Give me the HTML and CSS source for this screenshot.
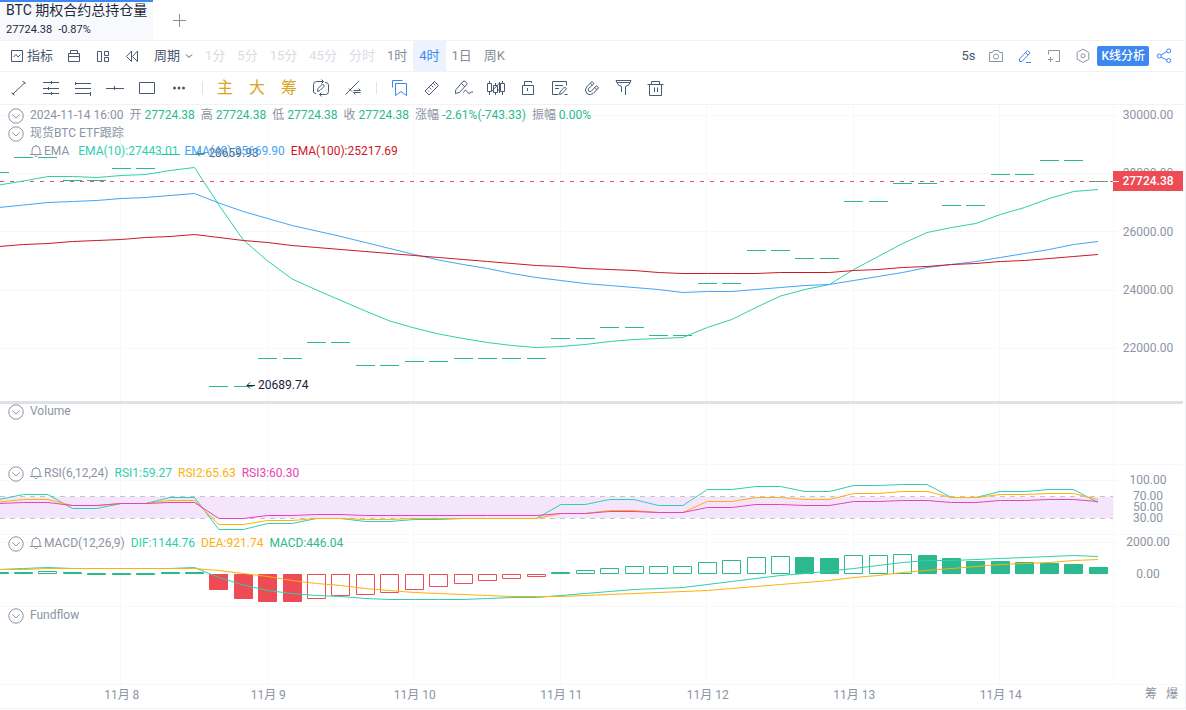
FILE: index.html
```html
<!DOCTYPE html>
<html lang="zh-CN">
<head>
<meta charset="utf-8">
<meta name="viewport" content="width=device-width, initial-scale=1">
<title>BTC 期权合约总持仓量</title>
<link rel="stylesheet" href="styles.css">
</head>
<body>
<svg class="defs" aria-hidden="true">
  <symbol id="i-collapse" viewBox="0 0 16 16"><circle cx="8" cy="8" r="7.2"/><path d="M4.2 6.4 8 10l3.8-3.6"/></symbol>
  <symbol id="i-bell" viewBox="0 0 12 14"><path d="M0 10.500h12M2 10.500V6a4 4 0 0 1 8 0v4.500M6 2V.8M4.500 11.500c.3 1.500 2.700 1.500 3 0"/></symbol>
</svg>
<div class="app">
  <header class="tabs">
    <button class="tab">
      <span class="tab-title">BTC 期权合约总持仓量</span>
      <span class="tab-sub"><span>27724.38</span><span>-0.87%</span></span>
    </button>
    <button class="icon-btn add" aria-label="添加"><svg viewBox="0 0 18 18"><path d="M9.500 3v13M3 9.500h13"/></svg></button>
  </header>

  <nav class="bar periods">
    <button class="tool labelled"><svg viewBox="0 0 14 14"><path d="M1.500 1.500h11v11h-11zM3.500 8 6 5.500l2 2.500 2.500-2.500"/></svg><span>指标</span></button>
    <button class="tool" aria-label="工具箱"><svg viewBox="0 0 14 14"><path d="M1.500 4.500h11v8h-11zM1.500 7.500h11M3.500 4.500v-3h7v3"/></svg></button>
    <button class="tool" aria-label="布局"><svg viewBox="0 0 14 14"><path d="M1.500 2.500h4v10h-4zM8.500 2.500h4v4h-4zM8.500 8.500h4v4h-4z"/></svg></button>
    <button class="tool" aria-label="回放"><svg viewBox="0 0 14 14"><path d="M6.500 2 1.500 7.500l5 5zM12.500 2l-5 5.500 5 5z"/></svg></button>
    <label class="period-select"><select aria-label="周期"><option>周期</option></select><svg viewBox="0 0 10 10"><path d="M2 3.500 5 6.500l3-3"/></svg></label>
    <button class="period off">1分</button>
    <button class="period off">5分</button>
    <button class="period off">15分</button>
    <button class="period off">45分</button>
    <button class="period off">分时</button>
    <button class="period">1时</button>
    <button class="period active">4时</button>
    <button class="period">1日</button>
    <button class="period">周K</button>
    <div class="actions">
      <span class="refresh">5s</span>
      <button class="act grey" aria-label="截图"><svg viewBox="0 0 16 16"><path d="M1.500 4.500h3l1-2h5l1 2h3v9h-13z"/><circle cx="8" cy="8.500" r="2.500"/></svg></button>
      <button class="act blue" aria-label="画线"><svg viewBox="0 0 16 16"><path d="M2.500 11 10.500 2.500l2.500 2.500-8 8.500H2.500zM8.500 4.500 11 7M9 14.500h5"/></svg></button>
      <button class="act grey" aria-label="新窗口"><svg viewBox="0 0 16 16"><path d="M2.500 6.500v-4h11v11h-4M4.500 9v5M2 11.500h5"/></svg></button>
      <button class="act grey" aria-label="设置"><svg viewBox="0 0 16 16"><path d="M8 1.200 13.800 4.400v6.800L8 14.500l-5.800-3.300V4.400z"/><circle cx="8" cy="7.800" r="2"/></svg></button>
      <button class="analyse">K线分析</button>
      <button class="act blue" aria-label="分享"><svg viewBox="0 0 16 16"><path d="m5 7 6-3.500M5 9l6 3.200"/><circle cx="3.200" cy="8" r="2"/><circle cx="12.700" cy="2.900" r="2"/><circle cx="12.700" cy="12.500" r="2"/></svg></button>
    </div>
  </nav>

  <nav class="bar drawing">
    <button class="icon-btn" aria-label="线段"><svg viewBox="0 0 18 18"><path d="M3 15 15 3.500M12.500 2.500q2.500 0 3 2.500M2 13.500q.5 2 2.500 2.500"/></svg></button>
    <button class="icon-btn" aria-label="水平线组"><svg viewBox="0 0 18 18"><path d="M1 3.500h16M1 9.500h16M1 14.500h16M9.500 2v3M6.500 8v3M9.500 13v3"/></svg></button>
    <button class="icon-btn" aria-label="平行线"><svg viewBox="0 0 18 18"><path d="M1 4.500h16M1 9.500h16M1 14.500h16M1.500 3v3M16.500 13v4"/></svg></button>
    <button class="icon-btn" aria-label="水平线"><svg viewBox="0 0 18 18"><path d="M0 9.500h18M8.500 7v4"/></svg></button>
    <button class="icon-btn" aria-label="矩形"><svg viewBox="0 0 18 18"><path d="M1.500 3.500h15v11h-15z"/></svg></button>
    <button class="icon-btn" aria-label="更多"><svg viewBox="0 0 18 18" class="filled"><circle cx="4.500" cy="9" r="1.500"/><circle cx="9" cy="9" r="1.500"/><circle cx="13.500" cy="9" r="1.500"/></svg></button>
    <i class="divider"></i>
    <button class="icon-btn gold">主</button>
    <button class="icon-btn gold">大</button>
    <button class="icon-btn gold">筹</button>
    <button class="icon-btn" aria-label="切换编辑"><svg viewBox="0 0 18 18"><path d="M1.500 13V5.500q0-3 3-3h7M9.500.5l2 2-2 2M1.500 13q.5 1.500 2.500 1.500M13 3.500q3.500 0 3.500 2.500v6.500q0 3-3 3h-6M9.500 13.500l-2 2 2 2M5.500 12.500l.5-3 4.500-4.500 2 2-4.500 4.500z"/></svg></button>
    <button class="icon-btn" aria-label="线段切换"><svg viewBox="0 0 18 18"><path d="M1.500 15.500 14.500 2.500M5 9.500l3 3M9.500 11.500h7l-2-2M16.500 13.500h-7l2 2"/></svg></button>
    <i class="divider"></i>
    <button class="icon-btn blue" aria-label="收藏"><svg viewBox="0 0 18 18"><path d="M1.500 8.500v-7h10M4.500 4.500h11v12l-5.500-4-5.500 4z"/></svg></button>
    <button class="icon-btn" aria-label="测量"><svg viewBox="0 0 18 18"><path d="M2 12 11.500 2.500l4 4L6 16zM6.500 8.500l1.800 1.800M8.500 6.500l1.800 1.800M10.500 4.500l1.800 1.800M5 11.500l1 1"/></svg></button>
    <button class="icon-btn" aria-label="画笔"><svg viewBox="0 0 18 18"><path d="M0 14.500 1 10.500 8 2.500q1-1 2.200 0l1.300 1.200q1 1 0 2L4.500 13.500zM6.500 4.500l3.300 3.200M8.500 13.500q2-4 3.500-1t3 1.500 3-1"/></svg></button>
    <button class="icon-btn" aria-label="K线"><svg viewBox="0 0 18 18"><path d="M.5 4.500h4v8h-4zM2.500 2v2.500M2.500 12.500V16M6.500 6.500h4v7h-4zM8.500 4v2.500M8.500 13.500V16M13.500 4.500h4v8h-4zM15.500 2v2.500M15.500 12.500V16M4.500 12.500l8-8.500M10.500 12l3-3M12.500 3v11"/></svg></button>
    <button class="icon-btn" aria-label="锁定"><svg viewBox="0 0 18 18"><path d="M3.500 6.500h11v9h-11zM5.500 6.500v-4h7v1.500M8.500 9v3"/></svg></button>
    <button class="icon-btn" aria-label="笔记"><svg viewBox="0 0 18 18"><path d="M7.500 15.500h-6v-13h14v4M4 6.500h8M4 9.500h4M8.500 15.500l.5-2.500 4.500-5 2 1.700-4.500 5zM13.500 15.500h3"/></svg></button>
    <button class="icon-btn" aria-label="磁吸"><svg viewBox="0 0 18 18"><path d="m9 2.500 2 2-5.500 5.200q-.8 1.500.3 2.500 1.200 1 2.500 0l5.200-5.500 2 2.200-5 5.300q-3.300 3-6.700.3-3-3.500 0-6.700zM7.300 4.200l2 2M11.900 8.500l2 2.200"/></svg></button>
    <button class="icon-btn" aria-label="筛选"><svg viewBox="0 0 18 18"><path d="M1 1.500h15q-1 5-5.500 6v8.500M1 1.500q1 5 5.500 6v5.500M2 3.500h13"/></svg></button>
    <button class="icon-btn" aria-label="删除"><svg viewBox="0 0 18 18"><path d="M.5 5.500h16M2.500 5.500v11h12v-11M4.500 5.500v-3h8v3M7.500 8.500v4.500M10.500 8.500v4.500"/></svg></button>
  </nav>

  <main class="chart">
    <section class="panel main-panel">
      <svg class="plot" id="plot-main" viewBox="0 105 1113 296" preserveAspectRatio="none"></svg>
      <div class="legend">
        <div class="row"><svg class="collapse"><use href="#i-collapse"/></svg><span class="name">2024-11-14 16:00</span>
          <span class="pair">开 <b>27724.38</b></span><span class="pair">高 <b>27724.38</b></span><span class="pair">低 <b>27724.38</b></span><span class="pair">收 <b>27724.38</b></span><span class="pair">涨幅 <b>-2.61%(-743.33)</b></span><span class="pair">振幅 <b>0.00%</b></span></div>
        <div class="row"><svg class="collapse"><use href="#i-collapse"/></svg><span class="name">现货BTC ETF跟踪</span></div>
        <div class="row nested"><svg class="bell"><use href="#i-bell"/></svg><span class="ema">EMA</span><span class="c-teal">EMA(10):27443.01</span><span class="c-blue">EMA(40):25669.90</span><span class="c-red">EMA(100):25217.69</span></div>
      </div>
      <span class="mark high"><svg viewBox="0 0 9 10"><path d="M1 5.500h8M4 2.500l-3 3 3 3"/></svg>28659.93</span>
      <span class="mark low"><svg viewBox="0 0 9 10"><path d="M1 5.500h8M4 2.500l-3 3 3 3"/></svg>20689.74</span>
      <div class="axis"><span>30000.00</span><span>28000.00</span><span>26000.00</span><span>24000.00</span><span>22000.00</span></div>
      <output class="price-tag">27724.38</output>
    </section>
    <section class="panel volume">
      <svg class="plot" id="plot-volume" viewBox="0 404 1113 60" preserveAspectRatio="none"></svg>
      <div class="legend"><div class="row"><svg class="collapse"><use href="#i-collapse"/></svg><span class="name">Volume</span></div></div>
    </section>
    <section class="panel rsi">
      <svg class="plot" id="plot-rsi" viewBox="0 465 1113 69" preserveAspectRatio="none"></svg>
      <div class="legend"><div class="row"><svg class="collapse"><use href="#i-collapse"/></svg><svg class="bell"><use href="#i-bell"/></svg><span class="name">RSI(6,12,24)</span><span class="c-teal">RSI1:59.27</span><span class="c-amber">RSI2:65.63</span><span class="c-pink">RSI3:60.30</span></div></div>
      <div class="axis"><span>100.00</span><span>70.00</span><span>50.00</span><span>30.00</span></div>
    </section>
    <section class="panel macd">
      <svg class="plot" id="plot-macd" viewBox="0 535 1113 71" preserveAspectRatio="none"></svg>
      <div class="legend"><div class="row"><svg class="collapse"><use href="#i-collapse"/></svg><svg class="bell"><use href="#i-bell"/></svg><span class="name">MACD(12,26,9)</span><span class="c-teal">DIF:1144.76</span><span class="c-amber">DEA:921.74</span><span class="c-green">MACD:446.04</span></div></div>
      <div class="axis"><span>2000.00</span><span>0.00</span></div>
    </section>
    <section class="panel fund">
      <svg class="plot" id="plot-fund" viewBox="0 607 1113 77" preserveAspectRatio="none"></svg>
      <div class="legend"><div class="row"><svg class="collapse"><use href="#i-collapse"/></svg><span class="name">Fundflow</span></div></div>
    </section>
    <footer class="time-axis">
      <div class="days"><span>11月 8</span><span>11月 9</span><span>11月 10</span><span>11月 11</span><span>11月 12</span><span>11月 13</span><span>11月 14</span></div>
      <div class="toggles"><button>筹</button><button>爆</button></div>
    </footer>
  </main>
</div>
<script src="chart.js"></script>
</body>
</html>
```
FILE: styles.css
```css
* { box-sizing: border-box; }

body {
  margin: 0;
  background: #fff;
  color: #8c94a3;
  font: 12px/16px Roboto, "Noto Sans CJK SC", sans-serif;
}

button, select {
  margin: 0;
  padding: 0;
  border: 0;
  background: none;
  color: inherit;
  font: inherit;
  cursor: pointer;
}

svg { display: block; fill: none; stroke: currentColor; }
.filled { fill: currentColor; stroke: none; }
.defs { position: absolute; width: 0; height: 0; }
.app { border-right: 1px solid #f0f2f5; }

/* tabs */
.tabs { display: flex; height: 41px; border-bottom: 1px solid #f1f2f6; }
.tab {
  display: flex;
  flex-direction: column;
  gap: 2px;
  padding: 0 6px;
  border-top: 2px solid #3c87f0;
  background: #f7f9fc;
  color: #1f2a3c;
  text-align: left;
}
.tab-title { font-size: 14px; line-height: 16px; }
.tab-sub { display: flex; gap: 6px; font-size: 11px; line-height: 20px; }
.icon-btn {
  display: flex;
  align-items: center;
  justify-content: center;
  width: 32px;
  height: 32px;
  color: #4a5970;
}
.icon-btn svg { width: 18px; height: 18px; }
.add { width: 52px; height: 40px; color: #8791a0; }

/* toolbars */
.bar { display: flex; align-items: center; border-bottom: 1px solid #f1f2f6; }
.periods { height: 31px; padding-left: 10px; font-size: 13px; color: #4a5970; }
.tool { display: flex; align-items: center; gap: 3px; margin-right: 15px; }
.labelled { margin-right: 14px; }
.tool svg { width: 14px; height: 14px; }
.period-select { display: flex; align-items: center; gap: 3px; margin-right: 5px; }
.period-select select { appearance: none; }
.period-select svg { width: 10px; height: 10px; }
.period { height: 30px; padding: 0 6px; color: #868e9b; }
.off { color: #d9dce2; }
.active { background: #eaf3fe; color: #3c87f0; }
.actions { display: flex; align-items: center; margin-left: auto; padding-right: 7px; }
.refresh { margin-right: 6px; }
.act { display: flex; justify-content: center; width: 29px; }
.act svg { width: 16px; height: 16px; }
.grey { color: #8c94a3; }
.blue { color: #3c87f0; }
.analyse {
  height: 20px;
  padding: 0 4px;
  border-radius: 2px;
  background: #3c87f0;
  color: #fff;
  font-size: 12px;
  font-weight: 500;
}
.drawing { height: 33px; padding-left: 3px; }
.divider { width: 14px; height: 12px; }
.divider:last-of-type { width: 15px; }
.divider::before { content: ""; display: block; width: 1px; height: 12px; margin-left: 7px; background: #dfe3e9; }
.gold { color: #d9a520; font-size: 16px; }

/* chart panels: plot, legend and marks share one cell */
.chart { padding-right: 2px; border-bottom: 1px solid #f0f2f5; }
.panel {
  display: grid;
  grid-template-columns: minmax(0, 1fr) 70px;
  border-bottom: 1px solid #f7f8fa;
}
.plot { grid-area: 1 / 1; width: 100%; height: 100%; overflow: visible; }
.legend { grid-area: 1 / 1; z-index: 1; padding: 1px 0 0 8px; }
.axis {
  grid-area: 1 / 2;
  display: flex;
  flex-direction: column;
  text-align: center;
}
.main-panel { position: relative; height: 299px; border-bottom: 3px solid #dee2e6; }
.volume { height: 61px; }
.volume .legend, .rsi .legend, .macd .legend, .fund .legend { padding-top: 0; }
.volume .row { height: 14px; }
.rsi .row, .macd .row, .fund .row { height: 16px; }
.rsi { height: 70px; }
.macd { height: 72px; }
.fund { height: 78px; }
.main-panel .axis { justify-content: space-between; padding: 2px 0 45px; }
.rsi .axis { padding-top: 10px; line-height: 11px; }
.rsi .axis span:first-child { margin-bottom: 5px; }
.macd .axis { gap: 18px; line-height: 14px; }

.row { display: flex; align-items: center; gap: 6px; height: 18px; white-space: nowrap; }
.row b { color: #2cb98f; font-weight: 400; -webkit-text-stroke: 0; }
.collapse { flex-shrink: 0; width: 16px; height: 16px; margin-top: 2px; }
.bell { width: 12px; height: 14px; }
.bell + span { margin-left: -4px; }
.nested { padding-left: 22px; }
.ema { margin-right: 3px; }
.c-teal { color: #2fcfae; }
.c-blue { color: #42a5f8; }
.c-red { color: #cf1628; }
.c-amber { color: #fdb10b; }
.c-pink { color: #e545b4; }
.c-green { color: #2cb98f; }

.mark { position: absolute; display: flex; align-items: center; gap: 3px; color: #16243a; }
.mark svg { width: 9px; height: 10px; }
.high { left: 16.6%; top: 40px; color: #5a6472; }
.low { left: 20.8%; top: 272px; }
.price-tag {
  position: absolute;
  top: 66px;
  right: 0;
  width: 70px;
  background: #ee4b55;
  color: #fff;
  font-weight: 500;
  line-height: 20px;
  text-align: center;
}
.price-tag::before { content: ""; position: absolute; left: 0; top: 10px; width: 6px; height: 1px; background: #fff; }

.time-axis { display: flex; height: 23px; line-height: 20px; }
.days { display: flex; flex: 1; padding: 0 3.3% 0 4.1%; text-align: center; }
.days span { flex: 1; }
.toggles { display: flex; justify-content: flex-end; gap: 9px; width: 70px; padding-right: 5px; line-height: 18px; }
.toggles button { align-self: flex-start; }

/* plot marks */
.plot * { vector-effect: non-scaling-stroke; }
.grid { stroke: #f7f8fa; }
.candle { stroke: #2cb98f; }
.teal { stroke: #2fcfae; }
.blue-line { stroke: #42a5f8; }
.red-line { stroke: #cf1628; }
.amber { stroke: #fdb10b; }
.pink { stroke: #e545b4; }
.band { fill: #f4e5fd; stroke: none; }
.limit { stroke: #c4c4ca; stroke-dasharray: 5 5; }
.last { stroke: #e8525c; stroke-dasharray: 4 6; }
.up { fill: #2cb98f; stroke: #2cb98f; }
.down { fill: #ee4b55; stroke: #ee4b55; }
.hollow { fill: #fff; }
```
FILE: chart.js
```js
// Each series holds one value per 4-hour bar; the first bar is five before the first day line.
const STEP = 24.42;
const FIRST = -0.9;
const barX = i => FIRST + i * STEP;
const pairs = list => list.flatMap(v => [v, v]);

const plot = id => {
  const svg = document.getElementById(id);
  return (tag, cls, attrs) => {
    const el = document.createElementNS('http://www.w3.org/2000/svg', tag);
    el.setAttribute('class', cls);
    for (const key in attrs) el.setAttribute(key, attrs[key]);
    svg.appendChild(el);
  };
};
const line = (draw, cls, ys) =>
  draw('polyline', cls, { points: ys.map((y, i) => barX(i).toFixed(1) + ',' + y).join(' ') });

const grid = (draw, top, bottom, rows) => {
  let d = '';
  for (let day = 0; day < 7; day++) d += `M${Math.floor(120.9 + day * 146.5)}.5 ${top}V${bottom}`;
  d += `M1113.5 ${top}V${bottom}`;
  rows.forEach(y => { d += `M0 ${y + 0.5}H1119`; });
  draw('path', 'grid', { d });
};

const main = plot('plot-main');
grid(main, 106, 401, [115, 173, 231, 290, 348]);
const prices = [172, ...pairs([157, 180, 168, 154, 386, 358, 342, 365, 361, 358, 358, 338, 327, 335, 283, 250, 258, 201, 183, 205, 174, 160]), 181];
main('path', 'candle', { d: prices.map((y, i) => `M${Math.round(barX(i) - 9.5)} ${y + 0.5}h19`).join('') });
main('path', 'last', { d: 'M0 181.5H1113' });
line(main, 'teal', [185, 181, 176.5, 176.5, 177.5, 175.5, 174.5, 170.5, 167.5, 205, 240, 261, 279, 290, 300.5, 311, 321, 328, 334, 338.5, 342.5, 345.5, 347.5, 346.5, 344.5, 341.5, 339.5, 338.5, 337.5, 327.5, 319.5, 307.5, 296, 289.5, 284.5, 269.5, 256.5, 243.5, 232.5, 227.5, 223.5, 214.5, 207.5, 198.5, 191.5, 189.5]);
line(main, 'blue-line', [207.5, 205, 202.5, 201.5, 200.5, 198.5, 197.5, 195.5, 193.5, 203, 211.5, 218.5, 225.5, 231, 236.5, 242.5, 248.5, 254.5, 260, 264.5, 268.5, 273.5, 277.5, 280.5, 283.5, 285.5, 287.5, 289.5, 292.5, 291.5, 291.5, 289.5, 287.5, 285.5, 284.5, 280.5, 276.5, 272.5, 267.5, 264.5, 261.5, 257.5, 253.5, 249.5, 244.5, 241.5]);
line(main, 'red-line', [246.5, 244.5, 243.5, 241.5, 240.5, 239.5, 237.5, 236.5, 234.5, 237.5, 240.5, 242.5, 245.5, 247.5, 249.5, 251.5, 253.5, 255.5, 257.5, 259.5, 261.5, 263.5, 265.5, 266.5, 268.5, 269.5, 270.5, 272.5, 273.5, 273.5, 273.5, 273.5, 272.5, 272.5, 272.5, 270.5, 269.5, 267.5, 266.5, 264.5, 263.5, 261.5, 260.5, 258.5, 256.5, 254.5]);

grid(plot('plot-volume'), 404, 464, []);

const rsi = plot('plot-rsi');
grid(rsi, 465, 534, [480]);
rsi('rect', 'band', { x: 0, y: 497, width: 1113, height: 21 });
rsi('path', 'limit', { d: 'M0 496.5H1113M0 518.5H1113' });
line(rsi, 'teal', [499.5, ...pairs([494.5, 508.5, 503.5, 497.5, 529.5, 523.5, 518.5, 521.5, 519.5, 518.5, 518.5, 504.5, 499.5, 505.5, 489.5, 486.5, 491.5, 485.5, 484.5, 497.5, 491.5, 489.5]), 502.5]);
line(rsi, 'amber', [502, ...pairs([499.5, 505.5, 503.5, 500.5, 524.5, 520.5, 518.5, 519.5, 518.5, 518.5, 518.5, 513.5, 510.5, 512.5, 501.5, 497.5, 499.5, 493.5, 491.5, 497.5, 494.5, 493.5]), 499.5]);
line(rsi, 'pink', [503.5, ...pairs([502.5, 505.5, 503.5, 502.5, 518.5, 515.5, 514.5, 515.5, 515.5, 515.5, 515.5, 513.5, 511.5, 512.5, 507.5, 504.5, 505.5, 501.5, 500.5, 502.5, 500.5, 499.5]), 501.5]);

const macd = plot('plot-macd');
grid(macd, 535, 606, [542, 574]);
const bars = [572, 572, 571, 572, 575, 575, 575, 572, 572, 590, 599, 602, 602, 599, 596, 595, 593, 590, 587, 584, 581, 579, 577, 572, 570, 568, 566, 566, 566, 562, 560, 557, 556, 557, 558, 555, 555, 554, 555, 558, 561, 561, 562, 563, 564, 567];
bars.forEach((v, i) => {
  const flat = v === 575;
  const down = v > 575;
  const hollow = i === 2 || (i >= 13 && i <= 22) || (i >= 24 && i <= 32) || (i >= 35 && i <= 37);
  const top = flat ? 573 : down ? 574 : v;
  const bottom = flat ? 575 : down ? v : 574;
  macd('rect', (down ? 'down' : 'up') + (hollow ? ' hollow' : ''), {
    x: Math.round(barX(i) - 9.5) + 0.5, y: top + 0.5, width: 18, height: bottom - top - 1
  });
});
line(macd, 'teal', [569.5, 568.5, 567.5, 568.5, 568.5, 568.5, 568.5, 568.5, 567.5, 577.5, 585, 590.5, 593.5, 595.5, 596.5, 598.5, 599.5, 599.5, 599.5, 599.5, 598.5, 597.5, 597.5, 595.5, 593.5, 591.5, 589.5, 588.5, 587.5, 584.5, 581.5, 578.5, 575.5, 573.5, 571, 568.5, 565.5, 562.5, 560.5, 560.5, 559.5, 558.5, 557.5, 556.5, 555.5, 556.5]);
line(macd, 'amber', [569.5, 569.5, 568.5, 568.5, 568.5, 568.5, 568.5, 568.5, 568.5, 570.5, 573.5, 576.5, 580.5, 583.5, 585.5, 588.5, 590.5, 592.5, 593.5, 594.5, 595.5, 596.5, 596.5, 596.5, 595.5, 594.5, 593.5, 592.5, 591.5, 590.5, 588.5, 586.5, 584.5, 582.5, 580.5, 577.5, 575.5, 572.5, 570.5, 568.5, 566.5, 564.5, 563.5, 562.5, 560.5, 559.5]);

grid(plot('plot-fund'), 607, 684, []);
```
